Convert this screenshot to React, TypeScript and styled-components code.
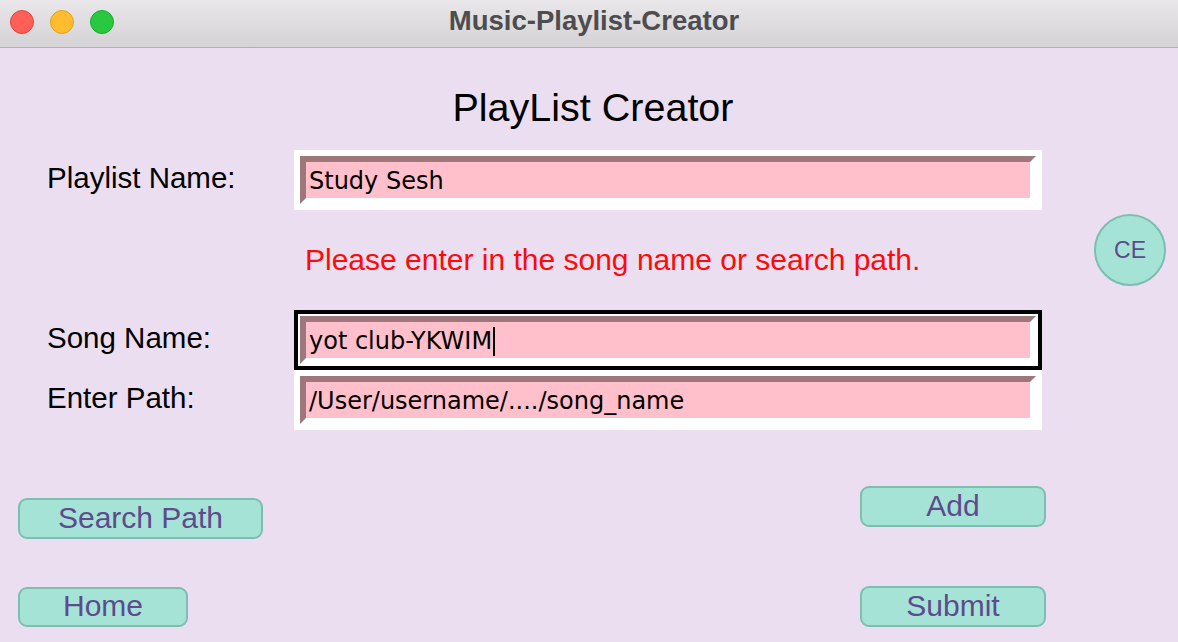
import React from "react";
import styled, { createGlobalStyle } from "styled-components";

const Global = createGlobalStyle`
  html, body { margin: 0; padding: 0; }
  body { width: 1178px; height: 642px; overflow: hidden; background: #ebdef0; font-family: "Liberation Sans", Arial, sans-serif; }
`;

const Window = styled.div`
  width: 1178px;
  height: 642px;
  display: flex;
  flex-direction: column;
  background: #ebdef0;
`;

const TitleBar = styled.div`
  height: 47px;
  border-bottom: 1px solid #b3b1b4;
  background: linear-gradient(#e9e7ea, #d4d2d5);
  display: flex;
  align-items: center;
  position: relative;
`;

const Lights = styled.div`
  display: flex;
  gap: 16px;
  padding-left: 10px;
  padding-bottom: 3px;
`;

const Light = styled.span<{ $fill: string; $edge: string }>`
  width: 22px;
  height: 22px;
  border-radius: 50%;
  background: ${(p) => p.$fill};
  border: 1px solid ${(p) => p.$edge};
`;

const WindowTitle = styled.div`
  position: absolute;
  left: 10px;
  right: 0;
  top: 0;
  bottom: 5px;
  display: flex;
  align-items: center;
  justify-content: center;
  font-size: 27.5px;
  font-weight: bold;
  color: #4d4c4e;
  pointer-events: none;
`;

const Heading = styled.h1`
  margin: 36px 0 0;
  padding-left: 8px;
  text-align: center;
  font-weight: normal;
  font-size: 39.5px;
  line-height: 46px;
  color: #000;
`;

const Form = styled.div`
  margin-top: 20px;
  display: grid;
  grid-template-columns: 247px 748px 1fr;
  grid-template-rows: 60px 100px 60px 60px;
  padding-left: 47px;
`;

const Label = styled.div`
  grid-column: 1;
  display: flex;
  align-items: center;
  padding-bottom: 4px;
  font-size: 29.5px;
  color: #000;
`;

const FieldBox = styled.div<{ $focused?: boolean }>`
  grid-column: 2;
  background: #fff;
  padding: 6px;
  box-shadow: ${(p) => (p.$focused ? "inset 0 0 0 4px #000" : "none")};
`;

const FieldInner = styled.div`
  border-style: solid;
  border-width: 6px;
  border-color: #9e777c #fff #fff #9e777c;
  background: #ffc0cb;
  font-family: "DejaVu Sans", Verdana, sans-serif;
  font-size: 24px;
  line-height: 36px;
  padding: 2px 0 0 3px;
  box-sizing: content-box;
  height: 34px;
  color: #000;
  white-space: nowrap;
  display: flex;
  align-items: center;
`;

const Caret = styled.span`
  display: inline-block;
  width: 2px;
  height: 29px;
  margin-left: 1px;
  background: #000;
`;

const Message = styled.div`
  grid-column: 2;
  display: flex;
  align-items: center;
  padding: 0 0 0 11px;
  font-size: 30px;
  color: #ff0a0a;
`;

const Side = styled.div`
  grid-column: 3;
  display: flex;
  justify-content: flex-end;
  align-items: flex-start;
  padding: 4px 12px 0 0;
`;

const RoundButton = styled.button`
  width: 72px;
  height: 72px;
  border-radius: 50%;
  background: #a6e3d7;
  border: 2px solid #7cbfb1;
  color: #5e4a8d;
  font-family: "Liberation Sans", Arial, sans-serif;
  font-size: 23px;
  padding: 0;
`;

const Actions = styled.div`
  margin-top: 56px;
  display: flex;
  justify-content: space-between;
  align-items: flex-end;
  padding: 0 132px 0 18px;
`;

const Column = styled.div<{ $gap: number }>`
  display: flex;
  flex-direction: column;
  gap: ${(p) => p.$gap}px;
`;

const Button = styled.button<{ $w: number; $h?: number }>`
  width: ${(p) => p.$w}px;
  height: ${(p) => p.$h ?? 41}px;
  background: #a6e3d7;
  border: 2px solid #7cbfb1;
  border-radius: 9px;
  color: #5e4a8d;
  font-family: "Liberation Sans", Arial, sans-serif;
  font-size: 30px;
  line-height: 1;
  padding: 0 0 2px;
  display: flex;
  align-items: center;
  justify-content: center;
`;

export default function App() {
  return (
    <>
      <Global />
      <Window>
        <TitleBar>
          <Lights>
            <Light $fill="#fe5f57" $edge="#e0443e" />
            <Light $fill="#febc2e" $edge="#dea123" />
            <Light $fill="#28c840" $edge="#1aab29" />
          </Lights>
          <WindowTitle>Music-Playlist-Creator</WindowTitle>
        </TitleBar>
        <Heading>PlayList Creator</Heading>
        <Form>
          <Label>Playlist Name:</Label>
          <FieldBox>
            <FieldInner>Study Sesh</FieldInner>
          </FieldBox>
          <div />
          <div />
          <Message>Please enter in the song name or search path.</Message>
          <Side>
            <RoundButton>CE</RoundButton>
          </Side>
          <Label>Song Name:</Label>
          <FieldBox $focused>
            <FieldInner>
              yot club-YKWIM
              <Caret />
            </FieldInner>
          </FieldBox>
          <div />
          <Label>Enter Path:</Label>
          <FieldBox>
            <FieldInner>/User/username/..../song_name</FieldInner>
          </FieldBox>
          <div />
        </Form>
        <Actions>
          <Column $gap={48}>
            <Button $w={245}>Search Path</Button>
            <Button $w={170} $h={40}>Home</Button>
          </Column>
          <Column $gap={59}>
            <Button $w={186}>Add</Button>
            <Button $w={186}>Submit</Button>
          </Column>
        </Actions>
      </Window>
    </>
  );
}
